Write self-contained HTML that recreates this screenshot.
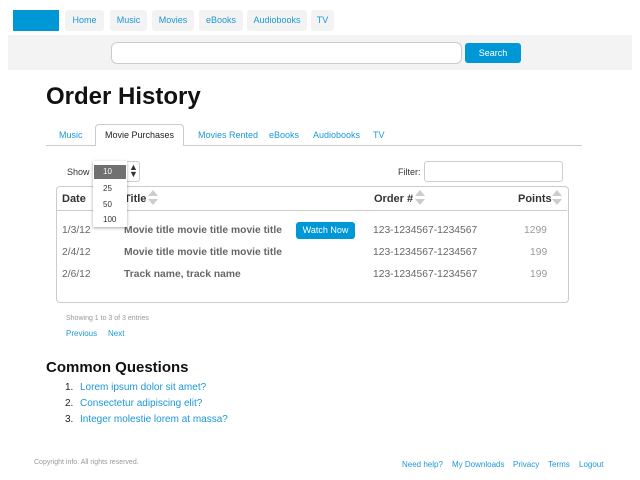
<!DOCTYPE html>
<html><head><style>
*{margin:0;padding:0;box-sizing:border-box}
body{width:640px;height:480px;background:#fff;font-family:"Liberation Sans",sans-serif;position:relative;overflow:hidden}
.a{position:absolute;white-space:nowrap}
.nav{background:#f3f3f3;border-radius:3px;color:#1a98d5;font-size:9px;height:21px;line-height:21px;text-align:center;top:10px}
.blue{color:#1a98d5}
.th{font-size:11px;font-weight:bold;color:#333;top:193px}
.td{font-size:10.3px;color:#666;}
.b{font-weight:bold}
.arr{width:0;height:0;border-left:5px solid transparent;border-right:5px solid transparent;position:absolute}
.up{border-bottom:6px solid #ccc}.dn{border-top:6px solid #ccc}
</style></head><body>
<div class="a" style="left:13px;top:10px;width:46px;height:21px;background:#0097d6"></div>
<div class="a nav" style="left:65px;width:39px">Home</div>
<div class="a nav" style="left:110px;width:37px">Music</div>
<div class="a nav" style="left:152px;width:42px">Movies</div>
<div class="a nav" style="left:199px;width:44px">eBooks</div>
<div class="a nav" style="left:247px;width:60px">Audiobooks</div>
<div class="a nav" style="left:311px;width:23px">TV</div>
<div class="a" style="left:8px;top:35px;width:624px;height:35px;background:#f3f3f3"></div>
<div class="a" style="left:111px;top:42px;width:351px;height:22px;background:#fff;border:1px solid #ccc;border-radius:6px"></div>
<div class="a" style="left:465px;top:43px;width:56px;height:20px;background:#0097d6;border-radius:3px;color:#fff;font-size:9px;line-height:20px;text-align:center">Search</div>
<div class="a" style="left:46px;top:83px;font-size:24px;font-weight:bold;color:#111">Order History</div>
<div class="a" style="left:46px;top:145px;width:536px;height:1px;background:#ccc"></div>
<div class="a blue" style="left:59px;top:130px;font-size:9px">Music</div>
<div class="a" style="left:95px;top:124px;width:89px;height:22px;background:#fff;border:1px solid #ccc;border-bottom:none;border-radius:4px 4px 0 0;font-size:9px;color:#222;text-align:center;line-height:21px">Movie Purchases</div>
<div class="a blue" style="left:198px;top:130px;font-size:9px">Movies Rented</div>
<div class="a blue" style="left:269px;top:130px;font-size:9px">eBooks</div>
<div class="a blue" style="left:313px;top:130px;font-size:9px">Audiobooks</div>
<div class="a blue" style="left:373px;top:130px;font-size:9px">TV</div>
<div class="a" style="left:67px;top:167px;font-size:9px;color:#333">Show</div>
<div class="a" style="left:398px;top:167px;font-size:9px;color:#333">Filter:</div>
<div class="a" style="left:424px;top:161px;width:139px;height:21px;border:1px solid #ccc;border-radius:3px"></div>
<div class="a" style="left:56px;top:186px;width:513px;height:117px;border:1px solid #ccc;border-radius:4px"></div>
<div class="a" style="left:57px;top:210px;width:510px;height:1px;background:#ccc"></div>
<div class="a th" style="left:62px">Date</div>
<div class="a th" style="left:124px">Title</div>
<div class="a th" style="left:374px">Order #</div>
<div class="a th" style="left:518px">Points</div>
<div class="arr up" style="left:148px;top:190px"></div><div class="arr dn" style="left:148px;top:199px"></div>
<div class="arr up" style="left:415px;top:190px"></div><div class="arr dn" style="left:415px;top:199px"></div>
<div class="arr up" style="left:552px;top:190px"></div><div class="arr dn" style="left:552px;top:199px"></div>
<div class="a td" style="left:62px;top:225px">1/3/12</div>
<div class="a td b" style="left:124px;top:225px">Movie title movie title movie title</div>
<div class="a" style="left:296px;top:222px;width:59px;height:17px;background:#0097d6;border-radius:3px;color:#fff;font-size:9px;line-height:17px;text-align:center">Watch Now</div>
<div class="a td" style="left:373px;top:225px">123-1234567-1234567</div>
<div class="a td" style="left:524px;top:225px;color:#999">1299</div>
<div class="a td" style="left:62px;top:247px">2/4/12</div>
<div class="a td b" style="left:124px;top:247px">Movie title movie title movie title</div>
<div class="a td" style="left:373px;top:247px">123-1234567-1234567</div>
<div class="a td" style="left:530px;top:247px;color:#999">199</div>
<div class="a td" style="left:62px;top:269px">2/6/12</div>
<div class="a td b" style="left:124px;top:269px">Track name, track name</div>
<div class="a td" style="left:373px;top:269px">123-1234567-1234567</div>
<div class="a td" style="left:530px;top:269px;color:#999">199</div>
<div class="a" style="left:93px;top:161px;width:47px;height:21px;border:1px solid #ccc;border-radius:3px;background:#fff"></div>
<div class="a" style="left:93px;top:161px;width:34px;height:66px;background:#fff;box-shadow:0 1px 3px rgba(0,0,0,.35);font-size:8px;color:#333"></div>
<div class="a" style="left:94px;top:165px;width:32px;height:14px;background:#707070;color:#fff;font-size:8px;line-height:14px;padding-left:9px">10</div>
<div class="a" style="left:103px;top:184px;font-size:8px;color:#333">25</div>
<div class="a" style="left:103px;top:200px;font-size:8px;color:#333">50</div>
<div class="a" style="left:103px;top:215px;font-size:8px;color:#333">100</div>
<div class="a" style="left:129px;top:164px;font-size:9px;color:#333;line-height:7px">▲<br>▼</div>
<div class="a" style="left:66px;top:315px;font-size:7px;color:#999">Showing 1 to 3 of 3 entries</div>
<div class="a blue" style="left:66px;top:329px;font-size:8px">Previous</div>
<div class="a blue" style="left:108px;top:329px;font-size:8px">Next</div>
<div class="a" style="left:46px;top:359px;font-size:15px;font-weight:bold;color:#111">Common Questions</div>
<div class="a" style="left:65px;top:380px;font-size:10px;color:#222;line-height:16px">1.<br>2.<br>3.</div>
<div class="a blue" style="left:80px;top:380px;font-size:10px;line-height:16px">Lorem ipsum dolor sit amet?<br>Consectetur adipiscing elit?<br>Integer molestie lorem at massa?</div>
<div class="a" style="left:34px;top:459px;font-size:7px;color:#999">Copyright info. All rights reserved.</div>
<div class="a blue" style="left:402px;top:460px;font-size:8px">Need help?</div>
<div class="a blue" style="left:452px;top:460px;font-size:8px">My Downloads</div>
<div class="a blue" style="left:513px;top:460px;font-size:8px">Privacy</div>
<div class="a blue" style="left:548px;top:460px;font-size:8px">Terms</div>
<div class="a blue" style="left:579px;top:460px;font-size:8px">Logout</div>
</body></html>
